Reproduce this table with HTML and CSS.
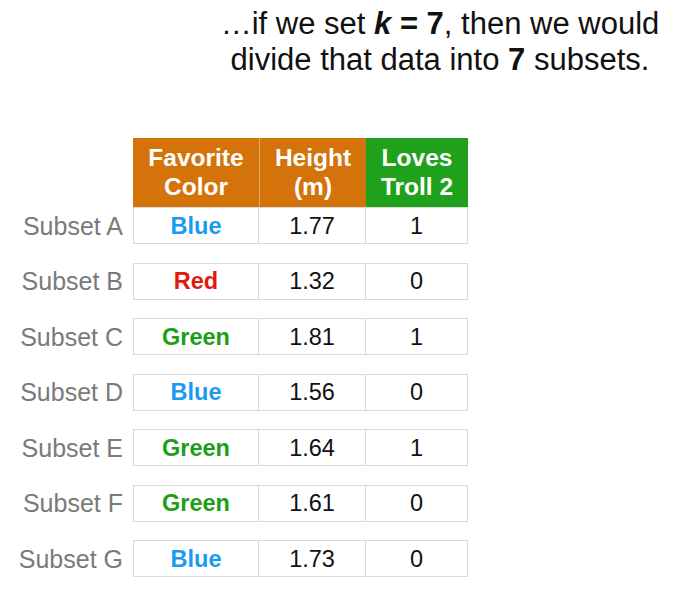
FILE: index.html
```html
<!DOCTYPE html>
<html>
<head>
<meta charset="utf-8">
<link rel="stylesheet" href="styles.css">
</head>
<body>
<div class="page">
  <div class="title">
    <div>…if we set <b><i>k</i> = 7</b>, then we would</div>
    <div>divide that data into <b>7</b> subsets.</div>
  </div>
  <div class="table">
    <div class="row head">
      <div class="label"></div>
      <div class="cell c1 orange">Favorite<br>Color</div>
      <div class="cell c2 orange">Height<br>(m)</div>
      <div class="cell c3 green">Loves<br>Troll 2</div>
    </div>
    <div class="row first">
      <div class="label">Subset A</div>
      <div class="cell c1 blue">Blue</div>
      <div class="cell c2">1.77</div>
      <div class="cell c3">1</div>
    </div>
    <div class="row">
      <div class="label">Subset B</div>
      <div class="cell c1 red">Red</div>
      <div class="cell c2">1.32</div>
      <div class="cell c3">0</div>
    </div>
    <div class="row">
      <div class="label">Subset C</div>
      <div class="cell c1 grn">Green</div>
      <div class="cell c2">1.81</div>
      <div class="cell c3">1</div>
    </div>
    <div class="row">
      <div class="label">Subset D</div>
      <div class="cell c1 blue">Blue</div>
      <div class="cell c2">1.56</div>
      <div class="cell c3">0</div>
    </div>
    <div class="row">
      <div class="label">Subset E</div>
      <div class="cell c1 grn">Green</div>
      <div class="cell c2">1.64</div>
      <div class="cell c3">1</div>
    </div>
    <div class="row">
      <div class="label">Subset F</div>
      <div class="cell c1 grn">Green</div>
      <div class="cell c2">1.61</div>
      <div class="cell c3">0</div>
    </div>
    <div class="row">
      <div class="label">Subset G</div>
      <div class="cell c1 blue">Blue</div>
      <div class="cell c2">1.73</div>
      <div class="cell c3">0</div>
    </div>
  </div>
</div>
</body>
</html>
```
FILE: styles.css
```css
html, body {
  margin: 0;
  padding: 0;
  background: #ffffff;
}
.page {
  width: 677px;
  height: 606px;
  font-family: "Liberation Sans", Arial, sans-serif;
  color: #111;
}
.title {
  width: 460px;
  margin-left: 210px;
  padding-top: 6px;
  text-align: center;
  font-size: 31px;
  line-height: 36px;
  color: #111;
}
.title b { font-weight: bold; }
.table {
  margin-top: 60px;
  display: flex;
  flex-direction: column;
}
.row {
  display: flex;
  align-items: stretch;
  height: 37px;
  margin-top: 18.5px;
}
.row.head {
  height: 69px;
  margin-top: 0;
}
.row.first { margin-top: 0; }
.label {
  width: 123px;
  margin-right: 10px;
  text-align: right;
  font-size: 25px;
  color: #7a7a7a;
  display: flex;
  align-items: center;
  justify-content: flex-end;
  padding-top: 1px;
  box-sizing: border-box;
}
.cell {
  box-sizing: border-box;
  display: flex;
  align-items: center;
  justify-content: center;
  text-align: center;
  font-size: 23.5px;
  color: #111;
  border: 1px solid #dadada;
  border-left: none;
  padding-top: 1px;
}
.cell.c1 { width: 126px; border-left: 1px solid #dadada; }
.cell.c2 { width: 107px; }
.cell.c3 { width: 102px; }
.head .cell {
  color: #fff;
  font-weight: bold;
  font-size: 24.5px;
  line-height: 29px;
  border: none;
  padding-top: 0;
  padding-bottom: 2px;
}
.head .cell.c1 { border-left: none; }
.head .cell.c2 { border-left: 1px solid #e4a868; }
.orange { background: #d4730a; }
.green { background: #1fa11b; }
.blue { color: #1a9bf2; font-weight: bold; }
.red { color: #e3190f; font-weight: bold; }
.grn { color: #1c9e17; font-weight: bold; }
```
